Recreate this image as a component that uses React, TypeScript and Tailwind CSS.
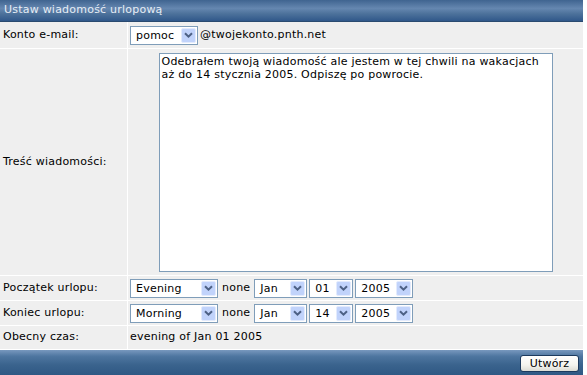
import React from "react";

const Chevron = () => (
  <svg width="9" height="7" viewBox="0 0 9 7">
    <path d="M1 1.2 L4.5 4.7 L8 1.2" stroke="#4d6185" strokeWidth="2" fill="none" />
  </svg>
);

function Sel({ label, w }: { label: string; w: string }) {
  return (
    <div className={`flex h-[19px] items-center border border-[#7f9db9] bg-white ${w}`}>
      <span className="flex-1 pl-[5px] leading-none">{label}</span>
      <span className="mr-[1px] flex h-[15px] w-[15px] items-center justify-center rounded-[2px] border border-[#e3ebfd] bg-[#c1d3fb]">
        <Chevron />
      </span>
    </div>
  );
}

export default function App() {
  return (
    <div className="h-[375px] w-[587px] bg-white font-['DejaVu_Sans',Verdana,sans-serif] text-[11px] tracking-[0.22px] text-black">
      <div className="w-[583px]">
        <div className="flex h-[22px] items-center border-b border-[#2a4a70] bg-[linear-gradient(to_bottom,#3f6490_0%,#6587b0_40%,#4d729b_65%,#30588a_100%)] pl-[4px] text-[#e6edf5]">
          Ustaw wiadomość urlopową
        </div>
        <div className="grid grid-cols-[127px_1fr] grid-rows-[26px_226px_24px_24px_23px] gap-px bg-white">
          <div className="flex items-center bg-[#efefef] pl-[3px]">Konto e-mail:</div>
          <div className="flex items-center bg-[#efefef] pl-[2px]">
            <Sel label="pomoc" w="w-[68px]" />
            <span className="ml-[2px]">@twojekonto.pnth.net</span>
          </div>

          <div className="flex items-center bg-[#efefef] pl-[3px]">Treść wiadomości:</div>
          <div className="flex items-center justify-center bg-[#efefef]">
            <textarea
              readOnly
              className="h-[219px] w-[394px] resize-none border border-[#7f9db9] bg-white px-[2px] py-[1px] font-['DejaVu_Sans',Verdana,sans-serif] text-[11px] leading-[13px] tracking-[0.22px] text-black outline-none"
              defaultValue={
                "Odebrałem twoją wiadomość ale jestem w tej chwili na wakacjach aż do 14 stycznia 2005. Odpiszę po powrocie."
              }
            />
          </div>

          <div className="flex items-center bg-[#efefef] pl-[3px]">Początek urlopu:</div>
          <div className="flex items-center bg-[#efefef] pl-[2px]">
            <Sel label="Evening" w="w-[88px]" />
            <span className="mx-[4px]">none</span>
            <div className="flex gap-[2px]">
              <Sel label="Jan" w="w-[53px]" />
              <Sel label="01" w="w-[44px]" />
              <Sel label="2005" w="w-[58px]" />
            </div>
          </div>

          <div className="flex items-center bg-[#efefef] pl-[3px]">Koniec urlopu:</div>
          <div className="flex items-center bg-[#efefef] pl-[2px]">
            <Sel label="Morning" w="w-[88px]" />
            <span className="mx-[4px]">none</span>
            <div className="flex gap-[2px]">
              <Sel label="Jan" w="w-[53px]" />
              <Sel label="14" w="w-[44px]" />
              <Sel label="2005" w="w-[58px]" />
            </div>
          </div>

          <div className="flex items-center bg-[#efefef] pl-[3px]">Obecny czas:</div>
          <div className="flex items-center bg-[#efefef] pl-[2px]">evening of Jan 01 2005</div>
        </div>
        <div className="mt-px flex h-[25px] items-end justify-end bg-[linear-gradient(to_bottom,#7898be_0%,#4e76a0_25%,#3a638d_60%,#2f5884_100%)] pb-[3px] pr-[4px]">
          <button className="flex h-[17px] w-[59px] items-center justify-center rounded-[3px] border border-[#1c3a5e] bg-[linear-gradient(to_bottom,#ffffff_0%,#f4f4ef_60%,#dcdcd4_100%)] text-[11px] leading-none text-black">
            Utwórz
          </button>
        </div>
      </div>
    </div>
  );
}
